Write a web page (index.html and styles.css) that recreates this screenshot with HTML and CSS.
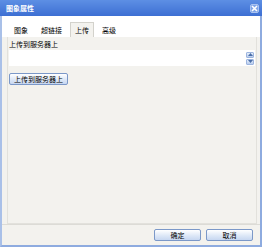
FILE: index.html
```html
<!DOCTYPE html>
<html>
<head>
<meta charset="utf-8">
<link rel="stylesheet" href="styles.css">
</head>
<body>
<div class="dialog">
  <div class="titlebar">
    <span class="title">图象属性</span>
    <span class="close"><svg width="7" height="7" viewBox="0 0 7 7"><path d="M1 1L6 6M6 1L1 6" stroke="#fff" stroke-width="1.6"/></svg></span>
  </div>
  <div class="body">
    <div class="tabs">
      <span class="tab">图象</span>
      <span class="tab">超链接</span>
      <span class="tab active">上传</span>
      <span class="tab">高级</span>
    </div>
    <div class="panel">
      <div class="label">上传到服务器上</div>
      <div class="field">
        <div class="spin">
          <span class="arr"><svg width="5" height="3" viewBox="0 0 5 3"><path d="M0 3L2.5 0L5 3Z" fill="#4a6ea8"/></svg></span>
          <span class="arr"><svg width="5" height="3" viewBox="0 0 5 3"><path d="M0 0L2.5 3L5 0Z" fill="#4a6ea8"/></svg></span>
        </div>
      </div>
      <button class="btn upload">上传到服务器上</button>
    </div>
    <div class="footer">
      <button class="btn wide">确定</button>
      <button class="btn wide">取消</button>
    </div>
  </div>
</div>
</body>
</html>
```

FILE: styles.css
```css
html, body {
  margin: 0;
  padding: 0;
  background: #ffffff;
}
body {
  font-family: "Noto Sans CJK SC", "Liberation Sans", sans-serif;
  font-size: 7px;
  color: #000;
}
.dialog {
  width: 262px;
  height: 247px;
  box-sizing: border-box;
  border-left: 2px solid #a9c0e8;
  border-right: 2px solid #8eabdf;
  border-bottom: 2px solid #8eabdf;
  display: flex;
  flex-direction: column;
}
.titlebar {
  height: 16px;
  margin: 0 -2px;
  background: linear-gradient(#5d8fe4, #3d6fd3);
  display: flex;
  align-items: center;
  justify-content: space-between;
  padding: 0 3px 0 6px;
  flex-shrink: 0;
}
.title {
  color: #fff;
  font-weight: bold;
  font-size: 7px;
  line-height: 8px;
}
.close {
  width: 9px;
  height: 9px;
  border-radius: 2px;
  background: #7fa4e8;
  border: 1px solid #a9c3f0;
  display: flex;
  align-items: center;
  justify-content: center;
  box-sizing: border-box;
}
.body {
  flex: 1;
  display: flex;
  flex-direction: column;
  background: #f3f2ee;
}
.tabs {
  background: #fff;
  display: flex;
  align-items: flex-end;
  gap: 3px;
  padding: 7px 0 0 7px;
  height: 21px;
  box-sizing: border-box;
}
.tab {
  padding: 2px 4px 3px;
  border: 1px solid transparent;
  border-bottom: none;
  line-height: 8px;
}
.tab.active {
  background: #f3f2ee;
  border-color: #d3d2cc;
  padding-top: 3px;
}
.panel {
  margin: 0 3px 0 5px;
  height: 187px;
  border: 1px solid #e2e1dc;
  border-top: none;
  background: #f3f2ee;
  padding: 3px 0 0 1px;
  box-sizing: border-box;
}
.label {
  line-height: 8px;
  height: 8px;
}
.field {
  margin-top: 2px;
  height: 16px;
  margin-right: 1px;
  background: #fff;
  display: flex;
  justify-content: flex-end;
  align-items: center;
}
.spin {
  display: flex;
  flex-direction: column;
  gap: 1px;
  margin-right: 1px;
}
.arr {
  width: 8px;
  height: 6px;
  background: linear-gradient(#e4edfa, #b9cdee);
  border: 1px solid #9db5df;
  box-sizing: border-box;
  border-radius: 1px;
  display: flex;
  align-items: center;
  justify-content: center;
}
.btn {
  font-family: inherit;
  font-size: 7px;
  color: #000;
  border: 1px solid #7b98c8;
  border-radius: 2px;
  background: linear-gradient(#ffffff, #dbe6f6 60%, #c7d7f1);
  padding: 0 4px;
  height: 12px;
  line-height: 10px;
  margin: 0;
}
.upload {
  margin-top: 7px;
  width: 59px;
  padding: 0;
}
.footer {
  flex: 1;
  display: flex;
  justify-content: flex-end;
  align-items: center;
  gap: 5px;
  padding: 0 7px 0 0;
  border-top: 1px solid #dcdbd6;
}
.wide {
  width: 47px;
}
```
